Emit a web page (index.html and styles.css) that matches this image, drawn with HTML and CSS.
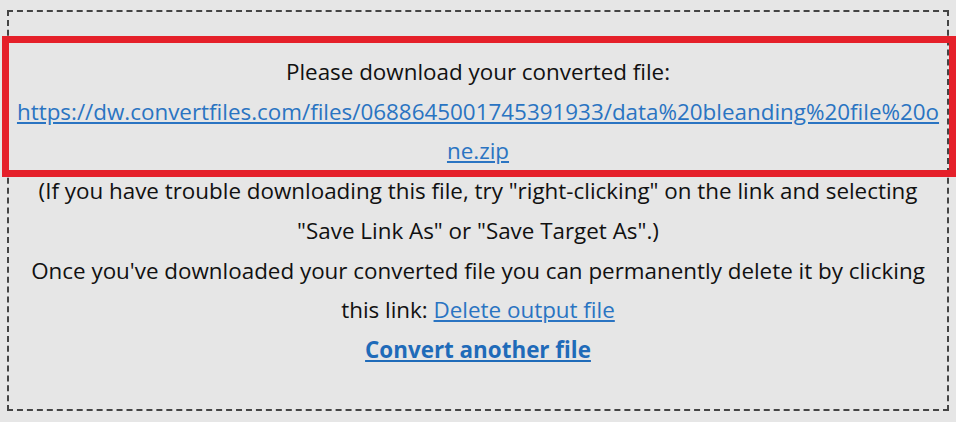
FILE: index.html
```html
<!DOCTYPE html>
<html lang="en">
<head>
    <meta charset="UTF-8">
    <meta name="viewport" content="width=device-width, initial-scale=1.0">
    <title>Download converted file</title>
    <link rel="stylesheet" href="styles.css">
</head>
<body>

    <div class="result-box">
        <div class="download-block">
            <p>Please download your converted file:</p>
            <p><a class="file-link" href="#">https://dw.convertfiles.com/files/0688645001745391933/data%20bleanding%20file%20one.zip</a></p>
            <div class="highlight"></div>
        </div>
        <p>(If you have trouble downloading this file, try "right-clicking" on the link and selecting "Save Link As" or "Save Target As".)</p>
        <p>Once you've downloaded your converted file you can permanently delete it by clicking this link: <a href="#">Delete output file</a></p>
        <p><a class="another" href="#">Convert another file</a></p>
    </div>

</body>
</html>
```

FILE: styles.css
```css
body {
    margin: 0;
    background: #e6e6e6;
    font-family: "Open Sans", Arial, sans-serif;
    font-size: 22.4px;
    line-height: 39.7px;
    color: #111;
}

.result-box {
    margin: 10px 7px 0 7px;
    height: 401px;
    box-sizing: border-box;
    border: 2px dashed #444;
    padding: 40px 5px 0 5px;
    text-align: center;
}

.result-box p {
    margin: 0;
}

a {
    color: #2a74c2;
    text-decoration: underline;
}

.file-link {
    word-break: break-all;
}

.another {
    font-weight: bold;
    color: #1f6bb9;
}

.download-block {
    position: relative;
}

/* red annotation frame drawn over the first block */
.highlight {
    position: absolute;
    left: -12px;
    right: -14px;
    top: -16px;
    bottom: -6px;
    border: 7px solid #e5202a;
    pointer-events: none;
}
```
